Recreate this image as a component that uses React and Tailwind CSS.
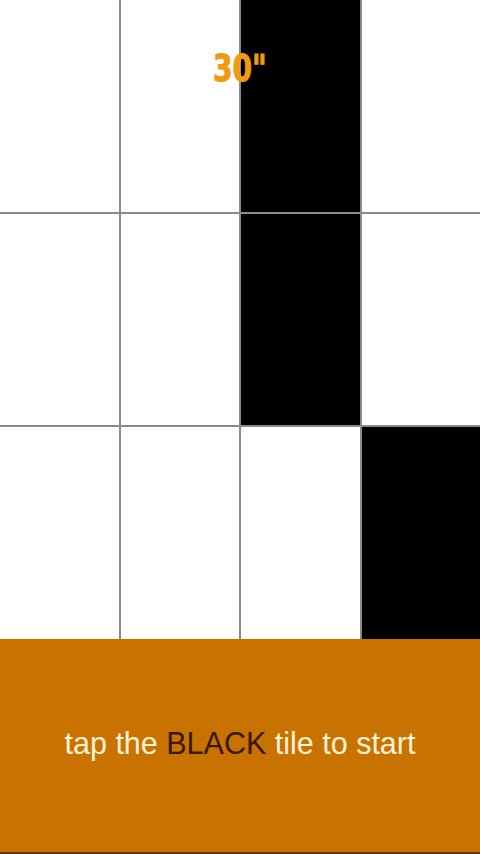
export default function App() {
  const black = [2, 2, 3];
  return (
    <div className="relative w-[480px] h-[854px] overflow-hidden bg-white">
      <div className="grid grid-cols-4 grid-rows-3 gap-[2px] bg-[#8a8a8a] h-[639px]">
        {[0, 1, 2].map((r) =>
          [0, 1, 2, 3].map((c) => (
            <div key={r + "-" + c} className={black[r] === c ? "bg-black" : "bg-white"} />
          ))
        )}
      </div>
      <div className="h-[213px] bg-[#c87300] flex items-center justify-center pb-[4px]">
        <p className="text-[30.5px] text-[#fff3d6]" style={{ fontFamily: '"Liberation Sans", Arial, sans-serif' }}>
          tap the <span className="text-[#3a1800]">BLACK</span> tile to start
        </p>
      </div>
      <div className="h-[2px] bg-[#5a3c0e]" />
      <div className="absolute top-[38px] left-0 right-0 flex justify-center">
        <div
          className="text-[38px] font-bold leading-[60px] text-[#f29a12] scale-x-[0.82] [-webkit-text-stroke:1px_#f29a12]"
          style={{ fontFamily: '"DejaVu Sans Condensed", sans-serif' }}
        >
          30"
        </div>
      </div>
    </div>
  );
}
